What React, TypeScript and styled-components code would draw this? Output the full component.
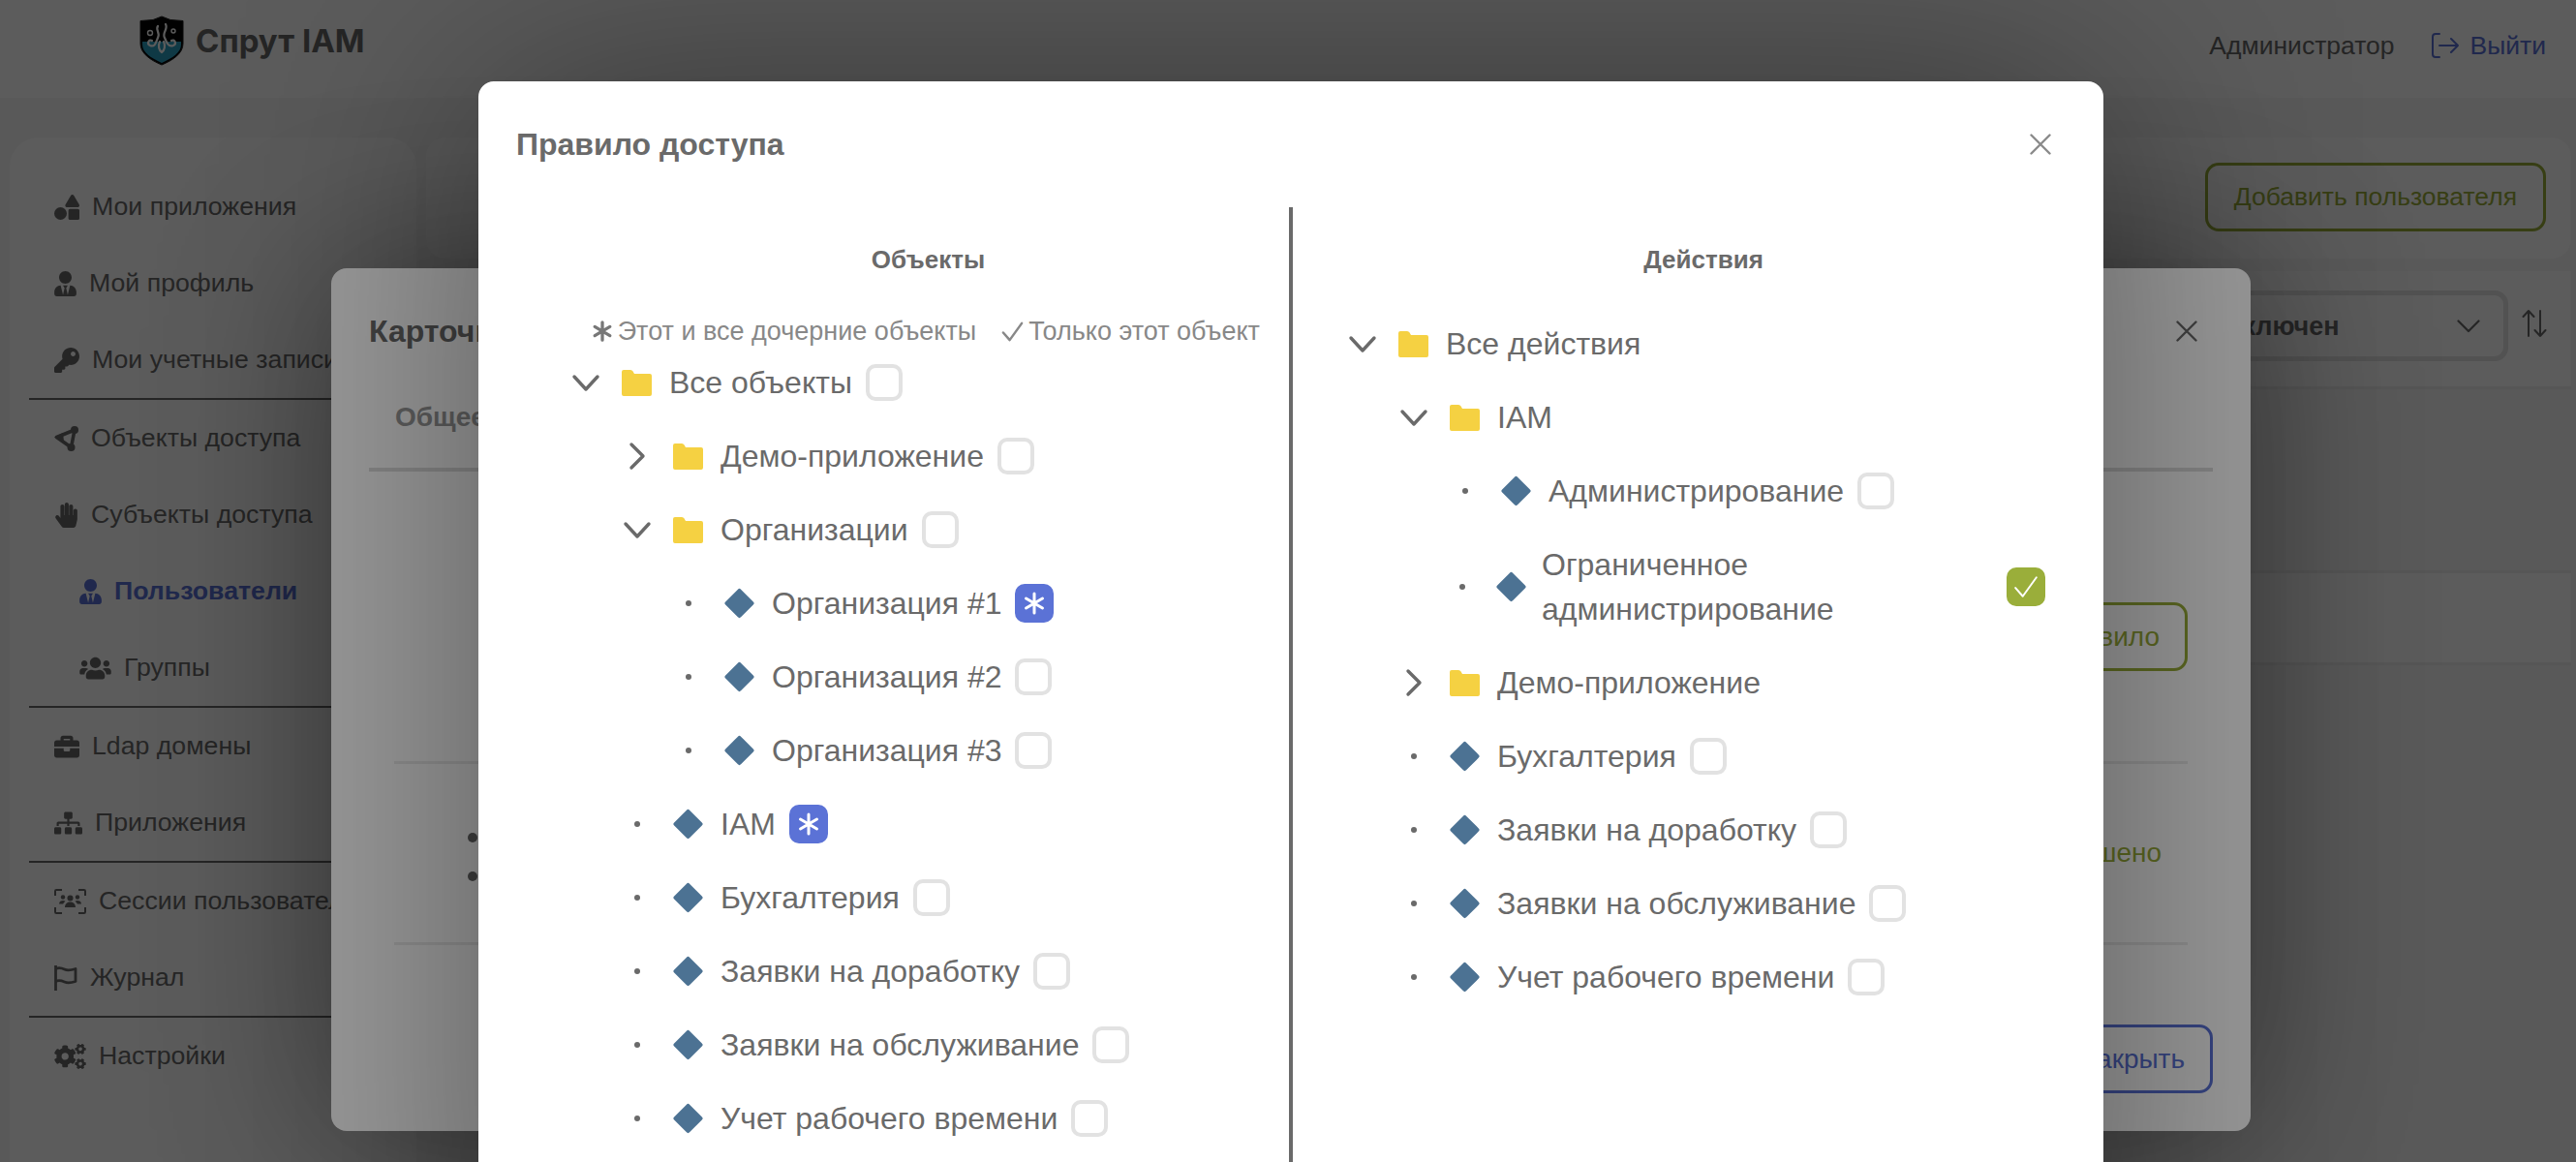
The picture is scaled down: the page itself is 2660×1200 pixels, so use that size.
import React from 'react'
import styled, { createGlobalStyle } from 'styled-components'
import {
  FaShapes,
  FaUserTie,
  FaKey,
  FaHandPaper,
  FaUsers,
  FaBriefcase,
  FaSitemap,
  FaCogs,
} from 'react-icons/fa'

const primary = '#5b72d6'
const olive = '#9aae3a'
const textColor = '#6a6a6a'

type NodeData = {
  label: string
  level: number
  kind: 'folder' | 'leaf'
  open?: boolean
  mark?: 'empty' | 'star' | 'check' | 'none'
}

const objects: NodeData[] = [
  { label: 'Все объекты', level: 0, kind: 'folder', open: true },
  { label: 'Демо-приложение', level: 1, kind: 'folder' },
  { label: 'Организации', level: 1, kind: 'folder', open: true },
  { label: 'Организация #1', level: 2, kind: 'leaf', mark: 'star' },
  { label: 'Организация #2', level: 2, kind: 'leaf' },
  { label: 'Организация #3', level: 2, kind: 'leaf' },
  { label: 'IAM', level: 1, kind: 'leaf', mark: 'star' },
  { label: 'Бухгалтерия', level: 1, kind: 'leaf' },
  { label: 'Заявки на доработку', level: 1, kind: 'leaf' },
  { label: 'Заявки на обслуживание', level: 1, kind: 'leaf' },
  { label: 'Учет рабочего времени', level: 1, kind: 'leaf' },
]

const actions: NodeData[] = [
  { label: 'Все действия', level: 0, kind: 'folder', open: true, mark: 'none' },
  { label: 'IAM', level: 1, kind: 'folder', open: true, mark: 'none' },
  { label: 'Администрирование', level: 2, kind: 'leaf' },
  { label: 'Ограниченное администрирование', level: 2, kind: 'leaf', mark: 'check' },
  { label: 'Демо-приложение', level: 1, kind: 'folder', mark: 'none' },
  { label: 'Бухгалтерия', level: 1, kind: 'leaf' },
  { label: 'Заявки на доработку', level: 1, kind: 'leaf' },
  { label: 'Заявки на обслуживание', level: 1, kind: 'leaf' },
  { label: 'Учет рабочего времени', level: 1, kind: 'leaf' },
]

const Chevron = ({ open }: { open?: boolean }) => (
  <svg width="30" height="30" viewBox="0 0 30 30" fill="none" stroke={textColor} strokeWidth="3.4" strokeLinecap="round" strokeLinejoin="round">
    {open ? <path d="M3 9l12 13L27 9" /> : <path d="M9 3l12 12L9 27" />}
  </svg>
)

const FolderIcon = () => (
  <svg width="31" height="27" viewBox="0 0 31 27">
    <path d="M0 2a2 2 0 0 1 2-2h7a3 3 0 0 1 2.6 1.6L13 4h16a2 2 0 0 1 2 2v19a2 2 0 0 1-2 2H2a2 2 0 0 1-2-2z" fill="#f5d142" />
  </svg>
)

const DiamondIcon = () => (
  <svg width="32" height="32" viewBox="0 0 32 32">
    <path d="M14.4 1.2a2.2 2.2 0 0 1 3.2 0l13.2 13.2a2.2 2.2 0 0 1 0 3.2L17.6 30.8a2.2 2.2 0 0 1-3.2 0L1.2 17.6a2.2 2.2 0 0 1 0-3.2z" fill="#4c7293" />
  </svg>
)

const StarIcon = ({ size, color, weight = 3 }: { size: number; color: string; weight?: number }) => (
  <svg width={size} height={size} viewBox="0 0 24 24" fill="none" stroke={color} strokeWidth={weight} strokeLinecap="round">
    <path d="M12 2v20M3.5 7l17 10M20.5 7l-17 10" />
  </svg>
)

const TickIcon = ({ size, color, weight }: { size: number; color: string; weight: number }) => (
  <svg width={size} height={size} viewBox="0 0 24 24" fill="none" stroke={color} strokeWidth={weight} strokeLinecap="round" strokeLinejoin="round">
    <path d="M2 13l7 8L22 3" />
  </svg>
)

const CloseIcon = ({ color }: { color: string }) => (
  <svg width="22" height="22" viewBox="0 0 22 22" fill="none" stroke={color} strokeWidth="2.4" strokeLinecap="round">
    <path d="M1.5 1.5l19 19M20.5 1.5l-19 19" />
  </svg>
)

const LogoIcon = () => (
  <svg width="46" height="52" viewBox="0 0 46 52">
    <path d="M23 1l9 3.5 13 1V29c0 10-10 17-22 22C11 46 1 39 1 29V5.5l13-1z" fill="#050505" stroke="#222" />
    <path d="M3 27h40v3c0 8-9 14-20 19C12 44 3 38 3 30z" fill="#2a9ec0" />
    <g fill="none" stroke="#fff" strokeWidth="2.2" strokeLinecap="round">
      <path d="M19 11c-3 4 3 7 0 12-2 5-3 10-8 8-4-2-1-7 2-5" />
      <path d="M27 9c3 5-4 9-1 14 2 5 4 10 9 8 4-2 1-7-2-5" />
      <path d="M21 27c-2 4-1 9 2 11 3-2 4-7 2-11" />
    </g>
    <circle cx="11" cy="18" r="2.5" fill="none" stroke="#fff" strokeWidth="1.4" />
    <circle cx="35" cy="16" r="2" fill="none" stroke="#fff" strokeWidth="1.4" />
  </svg>
)

const ObjectsIcon = () => (
  <svg width="25" height="26" viewBox="0 0 25 26">
    <path d="M2.500 11.500L21 4l-3.500 18z" fill="none" stroke="currentColor" strokeWidth="3.600" strokeLinejoin="round" />
    <path d="M0 11.500l9-4.500 1 9z" fill="currentColor" />
    <circle cx="21" cy="4" r="4" fill="currentColor" />
    <circle cx="17.500" cy="22" r="4" fill="currentColor" />
  </svg>
)

const SessionsIcon = () => (
  <svg width="33" height="26" viewBox="0 0 33 26">
    <path d="M1 7V2.2C1 1.5 1.5 1 2.2 1H8M25 1h5.8c.7 0 1.2.5 1.2 1.2V7M32 19v4.8c0 .7-.5 1.2-1.2 1.2H25M8 25H2.2C1.5 25 1 24.500 1 23.800V19" fill="none" stroke="currentColor" strokeWidth="2" />
    <g fill="currentColor">
      <circle cx="16.500" cy="9.500" r="3" />
      <circle cx="9" cy="8.500" r="2.200" />
      <circle cx="24" cy="8.500" r="2.200" />
      <path d="M11 19c0-3.500 2.500-5.500 5.500-5.500S22 15.500 22 19zM5 15.500c0-2.500 2-3.500 4-3.500 1 0 1.800.3 2.400.7-1.200 1-1.900 1.900-2.300 2.800zM28 15.500c0-2.500-2-3.500-4-3.500-1 0-1.800.3-2.400.7 1.200 1 1.900 1.900 2.300 2.800z" />
    </g>
  </svg>
)

const FlagIcon = () => (
  <svg width="24" height="26" viewBox="0 0 24 26" fill="none" stroke="currentColor" strokeWidth="2.800">
    <path d="M1.500 0v26" />
    <path d="M1.500 3.500c3-1.500 6-1 9 .5s7 1 11.500-.5v13c-4.500 1.500-8 2-11.500.5s-6-2-9-.5" strokeLinejoin="round" />
  </svg>
)

const LogoutIcon = () => (
  <svg width="28" height="26" viewBox="0 0 28 26" fill="none" stroke="currentColor" strokeWidth="2" strokeLinecap="round" strokeLinejoin="round">
    <path d="M8 1H4a3 3 0 0 0-3 3v18a3 3 0 0 0 3 3h4" />
    <path d="M8 13h19M20 6l7 7-7 7" />
  </svg>
)

const SortIcon = () => (
  <svg width="26" height="28" viewBox="0 0 26 28" fill="none" stroke="currentColor" strokeWidth="2" strokeLinecap="round" strokeLinejoin="round">
    <path d="M7 27V1M1.500 7L7 1l5.500 6" />
    <path d="M19 1v26M13.500 21l5.500 6 5.500-6" />
  </svg>
)

const TreeNode = ({ node, wrapped }: { node: NodeData; wrapped?: boolean }) => {
  const mark = node.mark || 'empty'
  return (
    <Row $level={node.level}>
      <Switcher $wrapped={wrapped}>
        {node.kind === 'folder' ? <Chevron open={node.open} /> : <Dot />}
      </Switcher>
      <NodeIcon $wrapped={wrapped}>{node.kind === 'folder' ? <FolderIcon /> : <DiamondIcon />}</NodeIcon>
      <NodeLabel $wrapped={wrapped}>{node.label}</NodeLabel>
      {mark === 'empty' && <Checkbox />}
      {mark === 'star' && (
        <CheckboxFilled $color={primary}>
          <StarIcon size={24} color="#fff" />
        </CheckboxFilled>
      )}
      {mark === 'check' && (
        <CheckboxFilled $color={olive}>
          <TickIcon size={26} color="#fff" weight={1.800} />
        </CheckboxFilled>
      )}
    </Row>
  )
}

const App = () => {
  return (
    <Page>
      <GlobalStyle />
      <Header>
        <Brand>
          <LogoIcon />
          <BrandName>Спрут IAM</BrandName>
        </Brand>
        <UserArea>
          <UserName>Администратор</UserName>
          <LogoutLink>
            <LogoutIcon />
            Выйти
          </LogoutLink>
        </UserArea>
      </Header>
      <Body>
        <Sidebar>
          <NavItem><FaShapes />Мои приложения</NavItem>
          <NavItem $icon={23}><FaUserTie />Мой профиль</NavItem>
          <NavItem><FaKey />Мои учетные записи</NavItem>
          <NavDivider />
          <NavItem $icon={25}><ObjectsIcon />Объекты доступа</NavItem>
          <NavItem $icon={25}><FaHandPaper />Субъекты доступа</NavItem>
          <NavItem $sub $active $icon={23}><FaUserTie />Пользователи</NavItem>
          <NavItem $sub $icon={33}><FaUsers />Группы</NavItem>
          <NavDivider />
          <NavItem><FaBriefcase />Ldap домены</NavItem>
          <NavItem $icon={29}><FaSitemap />Приложения</NavItem>
          <NavDivider />
          <NavItem $icon={33}><SessionsIcon />Сессии пользователей</NavItem>
          <NavItem $icon={24}><FlagIcon />Журнал</NavItem>
          <NavDivider />
          <NavItem $icon={33}><FaCogs />Настройки</NavItem>
        </Sidebar>
        <Content>
          <TopCard>
            <OutlineButton $color={olive}>Добавить пользователя</OutlineButton>
          </TopCard>
          <FilterCard>
            <SelectBox>
              Включен
              <svg width="24" height="14" viewBox="0 0 24 14" fill="none" stroke="currentColor" strokeWidth="2.200" strokeLinecap="round" strokeLinejoin="round">
                <path d="M1.500 1.500L12 12 22.500 1.500" />
              </svg>
            </SelectBox>
            <SortButton><SortIcon /></SortButton>
          </FilterCard>
          <TableRow />
          <TableRow />
        </Content>
      </Body>

      <Overlay />
      <UserModal>
        <ModalHead>
          <UserTitle>Карточка пользователя</UserTitle>
          <CloseIcon color="#6c6c6c" />
        </ModalHead>
        <Tabs>
          <TabItem>Общее</TabItem>
        </Tabs>
        <RuleAction>
          <OutlineButton $color={olive} $small>Добавить правило</OutlineButton>
        </RuleAction>
        <RuleBlock>
          <RuleList>
            <li>Организация #1</li>
            <li>IAM</li>
          </RuleList>
          <RuleStatus>Разрешено</RuleStatus>
        </RuleBlock>
        <ModalFoot>
          <OutlineButton $color={primary} $small>Закрыть</OutlineButton>
        </ModalFoot>
      </UserModal>

      <Overlay />
      <RuleModal>
        <RuleHead>
          <RuleTitle>Правило доступа</RuleTitle>
          <CloseIcon color="#8a8a8a" />
        </RuleHead>
        <Columns>
          <LeftColumn>
            <ColumnTitle $left={8}>Объекты</ColumnTitle>
            <Legend>
              <LegendItem><StarIcon size={22} color="#777" weight={3.600} />Этот и все дочерние объекты</LegendItem>
              <LegendItem><TickIcon size={23} color="#888" weight={2.600} />Только этот объект</LegendItem>
            </Legend>
            <Tree>
              {objects.map((node) => (
                <TreeNode key={node.label} node={node} />
              ))}
            </Tree>
          </LeftColumn>
          <RightColumn>
            <ColumnTitle $right={34}>Действия</ColumnTitle>
            <ActionsTree>
              {actions.map((node) => (
                <TreeNode key={node.label} node={node} wrapped={node.mark === 'check'} />
              ))}
            </ActionsTree>
          </RightColumn>
        </Columns>
      </RuleModal>
    </Page>
  )
}

const GlobalStyle = createGlobalStyle`
  html, body {
    margin: 0;
    height: 100%;
    overflow: hidden;
  }
  body {
    font-family: "Liberation Sans", Arial, sans-serif;
    color: ${textColor};
  }
  * {
    box-sizing: border-box;
  }
`

const Page = styled.div`
  position: relative;
  width: 2660px;
  height: 1200px;
  overflow: hidden;
  background-color: #f9f9f9;
`

const Header = styled.header`
  height: 101px;
  background-color: #fff;
  display: flex;
  align-items: center;
  justify-content: space-between;
  padding: 0 31px 17px 144px;
`

const Brand = styled.div`
  display: flex;
  align-items: center;
  gap: 12px;
`

const BrandName = styled.span`
  font-family: Inter, "Liberation Sans", sans-serif;
  font-weight: 700;
  font-size: 33px;
  color: ${textColor};
`

const UserArea = styled.div`
  display: flex;
  align-items: center;
  gap: 38px;
  padding-top: 10px;
  font-size: 26.5px;
`

const UserName = styled.span`
  color: ${textColor};
`

const LogoutLink = styled.span`
  display: flex;
  align-items: center;
  gap: 12px;
  color: ${primary};
`

const Body = styled.div`
  display: flex;
  gap: 10px;
  padding: 41px 5px 0 10px;
`

const Sidebar = styled.nav`
  width: 420px;
  height: 1100px;
  flex-shrink: 0;
  background-color: #fff;
  border-radius: 30px;
  padding: 32px 0 0 20px;
`

const NavItem = styled.div<{ $sub?: boolean; $active?: boolean; $icon?: number }>`
  height: 79px;
  display: flex;
  align-items: center;
  gap: 13px;
  padding-left: ${(p) => (p.$sub ? '52px' : '26px')};
  font-size: 26.7px;
  white-space: nowrap;
  font-weight: ${(p) => (p.$active ? 700 : 400)};
  color: ${(p) => (p.$active ? primary : textColor)};
  svg {
    width: ${(p) => p.$icon ?? 26}px;
    height: 26px;
    flex-shrink: 0;
  }
`

const NavDivider = styled.div`
  height: 2px;
  background-color: #6a6a6a;
`

const Content = styled.main`
  flex: 1;
  min-width: 0;
  display: flex;
  flex-direction: column;
`

const TopCard = styled.div`
  height: 125px;
  background-color: #fff;
  border-radius: 20px;
  display: flex;
  justify-content: flex-end;
  align-items: flex-start;
  padding: 26px 26px 0 0;
`

const OutlineButton = styled.button<{ $color: string; $small?: boolean }>`
  height: 71px;
  padding: 0 ${(p) => (p.$small ? '26px' : '27px')};
  background: transparent;
  border: 3px solid ${(p) => p.$color};
  border-radius: 14px;
  color: ${(p) => p.$color};
  font-family: inherit;
  font-size: ${(p) => (p.$small ? '28px' : '26.5px')};
  white-space: nowrap;
`

const FilterCard = styled.div`
  margin-top: 13px;
  height: 122px;
  background-color: #fff;
  border-bottom: 3px solid #eee;
  display: flex;
  justify-content: flex-end;
  align-items: flex-start;
  gap: 14px;
  padding: 20px 25px 0 0;
`

const SelectBox = styled.div`
  width: 310px;
  height: 73px;
  border: 5px solid #e4e4e4;
  border-radius: 14px;
  display: flex;
  align-items: center;
  justify-content: space-between;
  padding: 1px 24px 0 11px;
  font-size: 27px;
  font-weight: 700;
  color: ${textColor};
`

const SortButton = styled.div`
  display: flex;
  padding-top: 20px;
  color: ${textColor};
`

const TableRow = styled.div`
  height: 95px;
  background-color: #fff;
  border-bottom: 3px solid #eee;
  &:nth-of-type(3) {
    height: 190px;
    background-color: #f9f9f9;
  }
`

const Overlay = styled.div`
  position: absolute;
  inset: 0;
  background-color: rgba(0, 0, 0, 0.4);
`

const UserModal = styled.section`
  position: absolute;
  left: 342px;
  top: 277px;
  width: 1982px;
  height: 891px;
  display: flex;
  flex-direction: column;
  background-color: #fff;
  border-radius: 16px;
  padding: 40px 39px 39px 39px;
  box-shadow: 0 0 180px rgba(0, 0, 0, 0.42);
`

const ModalHead = styled.div`
  height: 50px;
  display: flex;
  align-items: center;
  justify-content: space-between;
  padding-right: 16px;
`

const UserTitle = styled.h2`
  margin: 0;
  font-size: 32px;
  font-weight: 700;
  color: ${textColor};
`

const Tabs = styled.div`
  margin-top: 44px;
  height: 76px;
  border-bottom: 4px solid #dcdcdc;
  padding: 4px 0 0 27px;
`

const TabItem = styled.span`
  font-size: 28px;
  font-weight: 700;
  color: #9a9a9a;
`

const RuleAction = styled.div`
  display: flex;
  justify-content: flex-end;
  margin-top: 135px;
  padding: 0 26px 0 0;
`

const RuleBlock = styled.div`
  margin: 93px 26px 0 26px;
  height: 190px;
  border-top: 3px solid #ececec;
  border-bottom: 3px solid #ececec;
  display: flex;
  align-items: center;
  justify-content: space-between;
  padding-right: 27px;
`

const RuleList = styled.ul`
  margin: 0;
  padding: 4px 0 0 102px;
  font-size: 32px;
  line-height: 40px;
  color: #6a6a6a;
`

const RuleStatus = styled.span`
  font-size: 28px;
  color: ${olive};
`

const ModalFoot = styled.div`
  margin-top: auto;
  display: flex;
  justify-content: flex-end;
`

const RuleModal = styled.section`
  position: absolute;
  left: 494px;
  top: 84px;
  width: 1678px;
  height: 1300px;
  background-color: #fff;
  border-radius: 16px;
  box-shadow: 0 0 260px rgba(0, 0, 0, 0.42);
`

const RuleHead = styled.div`
  height: 130px;
  display: flex;
  align-items: center;
  justify-content: space-between;
  padding: 0 54px 0 39px;
`

const RuleTitle = styled.h1`
  margin: 0;
  font-size: 32px;
  font-weight: 700;
  color: ${textColor};
`

const Columns = styled.div`
  display: grid;
  grid-template-columns: 841px 1fr;
  min-height: 1170px;
`

const LeftColumn = styled.div`
  border-right: 4px solid #6a6a6a;
  padding: 0 0 0 84px;
`

const RightColumn = styled.div`
  padding: 0 0 0 45px;
`

const ColumnTitle = styled.h3<{ $left?: number; $right?: number }>`
  margin: 36px 0 0;
  height: 36px;
  line-height: 36px;
  font-size: 26px;
  font-weight: 700;
  text-align: center;
  color: ${textColor};
  padding: 0 ${(p) => p.$right ?? 0}px 0 ${(p) => p.$left ?? 0}px;
`

const Legend = styled.div`
  margin-top: 38px;
  height: 36px;
  display: flex;
  align-items: center;
  justify-content: flex-end;
  gap: 26px;
  padding-right: 30px;
  font-size: 27px;
  color: #888;
`

const LegendItem = styled.span`
  display: flex;
  align-items: center;
  gap: 5px;
`

const Tree = styled.div`
  margin-top: -3px;
`

const ActionsTree = styled.div`
  margin-top: 31px;
  width: 750px;
`

const Row = styled.div<{ $level: number }>`
  display: flex;
  align-items: center;
  min-height: 76px;
  padding: 15px 0;
  margin-left: ${(p) => p.$level * 53}px;
`

const Switcher = styled.span<{ $wrapped?: boolean }>`
  flex-shrink: 0;
  width: ${(p) => (p.$wrapped ? '48px' : '53px')};
  height: 30px;
  display: flex;
  align-items: center;
  justify-content: center;
`

const Dot = styled.i`
  width: 6px;
  height: 6px;
  border-radius: 50%;
  background-color: ${textColor};
`

const NodeIcon = styled.span<{ $wrapped?: boolean }>`
  flex-shrink: 0;
  display: flex;
  margin-left: 11px;
  margin-right: ${(p) => (p.$wrapped ? '16px' : '18px')};
  width: 31px;
  justify-content: center;
`

const NodeLabel = styled.span<{ $wrapped?: boolean }>`
  font-size: 32px;
  line-height: 46px;
  color: ${textColor};
  ${(p) => (p.$wrapped ? 'flex: 1; max-width: 466px;' : 'white-space: nowrap;')}
`

const Checkbox = styled.span`
  flex-shrink: 0;
  margin-left: 14px;
  width: 38px;
  height: 38px;
  border: 4px solid #e2e2e2;
  border-radius: 10px;
`

const CheckboxFilled = styled.span<{ $color: string }>`
  flex-shrink: 0;
  margin-left: 14px;
  width: 40px;
  height: 40px;
  border-radius: 10px;
  background-color: ${(p) => p.$color};
  display: flex;
  align-items: center;
  justify-content: center;
`

export default App
